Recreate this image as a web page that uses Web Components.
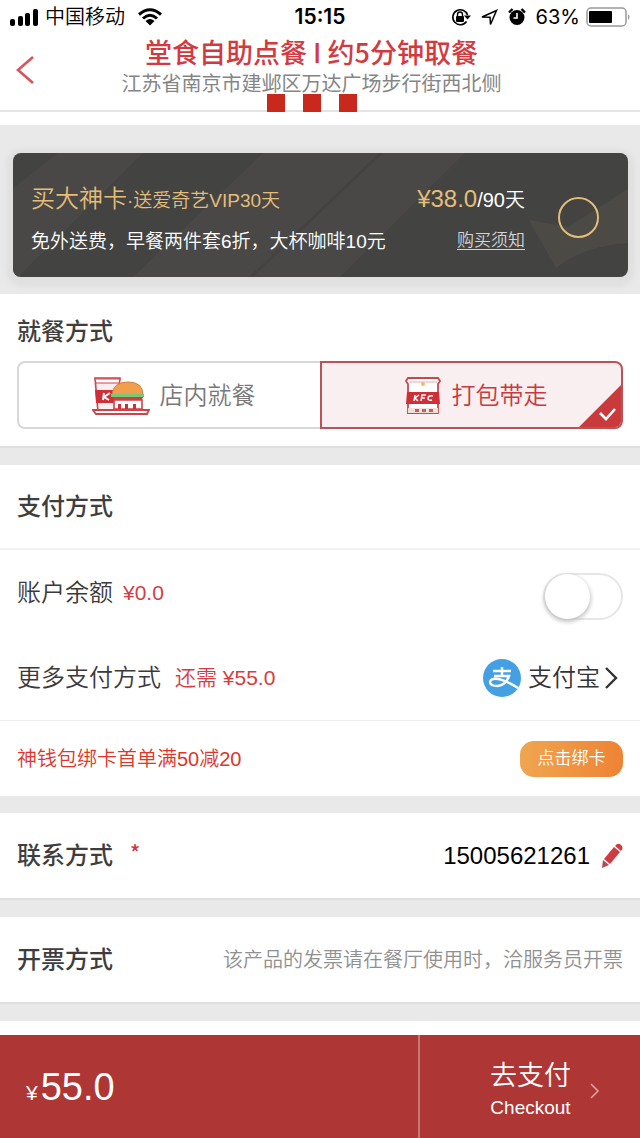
<!DOCTYPE html>
<html lang="zh-CN">
<head>
<meta charset="utf-8">
<meta name="viewport" content="width=device-width, initial-scale=1">
<title>确认订单</title>
<style>
  html, body { margin: 0; }
  body {
    font-family: "Liberation Sans", "Noto Sans CJK SC", sans-serif;
    font-weight: 350;
    color: #3a3a3a;
    background: #fff;
  }
</style>
</head>
<body>
<checkout-page></checkout-page>
<script>
const define = (name, css, html) => customElements.define(name, class extends HTMLElement {
  constructor() {
    super();
    this.attachShadow({ mode: 'open' }).innerHTML =
      `<style>*{box-sizing:border-box}svg{display:block;flex:none}${css}</style>${html}`;
  }
});

define('status-bar', `
  :host { display: grid; grid-template-columns: 1fr auto 1fr; align-items: center; height: 34px; padding: 0 10px; color: #000; }
  div { display: flex; align-items: center; }
  .left { gap: 7px; font-size: 20px; line-height: 30px; }
  .left svg + span { margin-right: 6px; }
  .right { justify-content: flex-end; gap: 10px; font: 20px/30px Inter, sans-serif; }
  .battery { display: flex; gap: 6px; margin-right: -1px; }
  time { font: 600 21px/30px Inter, sans-serif; }
`, `
  <div class="left">
    <svg width="28" height="17" viewBox="0 0 28 17"><rect y="10" width="5" height="7" rx="2"/><rect x="8" y="7" width="5" height="10" rx="2"/><rect x="15" y="4" width="5" height="13" rx="2"/><rect x="23" width="5" height="17" rx="2"/></svg>
    <span>中国移动</span>
    <svg width="24" height="18" viewBox="0 0 24 18"><g fill="none" stroke="#000" stroke-width="3"><path d="M1 6.500Q12-3 23 6.500"/><path d="M5 10.500Q12 4 19 10.500"/></g><path d="M7.500 13Q12 9 16.500 13L12 17.500Z"/></svg>
  </div>
  <time>15:15</time>
  <div class="right">
    <svg width="20" height="18" viewBox="0 0 20 18"><path d="M15.500 13.500A7.500 7.500 0 1 1 16.500 7" fill="none" stroke="#000" stroke-width="1.600"/><path d="M13 7.500h7l-3.500 4z"/><rect x="5" y="8" width="8" height="6" rx="1"/><path d="M6.500 8V6.500a2.500 2.500 0 0 1 5 0V8" fill="none" stroke="#000" stroke-width="1.400"/></svg>
    <svg width="17" height="17" viewBox="0 0 17 17"><path d="M1 8L15.500 1.500 9.500 15.500 9 8.200Z" fill="none" stroke="#000" stroke-width="1.500"/></svg>
    <svg width="18" height="18" viewBox="0 0 18 18"><circle cx="9" cy="9.500" r="7.500"/><path d="M1 4.500L4.500 1M17 4.500L13.500 1" stroke="#000" stroke-width="2.400"/><path d="M9 5v5H5.500" fill="none" stroke="#fff" stroke-width="1.600"/></svg>
    <div class="battery"><span>63%</span>
    <svg width="45" height="20" viewBox="0 0 45 20"><rect x="1" y="1" width="39" height="18" rx="4" fill="none" stroke="#999" stroke-width="1.500"/><rect x="3" y="4" width="23" height="12" rx="1"/><path d="M42 7q3 3 0 6z" fill="#999"/></svg></div>
  </div>
`);

define('page-header', `
  :host { display: block; position: relative; border-bottom: 2px solid #e4e4e4; padding: 1px 77px 11px 60px; text-align: center; margin-bottom: 13px; }
  h1 { margin: 0; font-family: "Noto Sans CJK SC", sans-serif; font-size: 27px; line-height: 34px; font-weight: 500; color: #d33a3f; }
  p { margin: 0; font-size: 20px; line-height: 30px; font-weight: 400; color: #858585; white-space: nowrap; }
  button { position: absolute; left: 0; top: 12px; width: 50px; height: 48px; padding: 0 0 0 16px; border: 0; background: none; }
  .dots { position: absolute; inset: auto 17px -2px 0; display: flex; justify-content: center; gap: 18px; }
  i { width: 18px; height: 18px; background: #c9281c; }
`, `
  <button aria-label="返回"><svg width="18" height="30" viewBox="0 0 18 30"><path d="M17 2L2 15 17 28" fill="none" stroke="#d9535a" stroke-width="2.600"/></svg></button>
  <h1><slot name="title"></slot></h1>
  <p><slot></slot></p>
  <div class="dots"><i></i><i></i><i></i></div>
`);

define('member-card', `
  :host { display: block; background: #e9e9e9; padding: 28px 12px 17px 13px; }
  article { position: relative; display: grid; grid-template-columns: minmax(0, 1fr) auto 41px; column-gap: 33px; align-items: center; height: 124px; padding: 10px 29px 0 18px; border-radius: 8px; background: #434342; overflow: hidden; color: #fff; }
  .frame { border-radius: 10px; box-shadow: 0 3px 5px 7px #e0e0e0; }
  .bg { position: absolute; inset: 0; width: 100%; height: 100%; }
  .copy, .price { position: relative; display: grid; row-gap: 9px; white-space: nowrap; }
  .price { justify-items: end; }
  .copy div, .price div { line-height: 32px; font-size: 19px; }
  .gold { color: #e5bd78; }
  .big { font-size: 24px; }
  .price .line { font-size: 20px; }
  a { font-size: 17px; line-height: 32px; color: #d4d4d4; text-decoration: underline; text-underline-offset: 3px; }
  input { appearance: none; position: relative; width: 41px; height: 41px; margin: 0 0 6px; border: 2px solid #e5bd78; border-radius: 50%; }
  input:checked { background: #e5bd78; }
`, `
  <div class="frame"><article>
    <svg class="bg" viewBox="0 0 615 124" preserveAspectRatio="none"><g fill="#494846"><path d="M0 35L45 0H130L5 124H0Z"/><path d="M120 124L250 0H366L236 124Z"/><path d="M240 124L370 0H452L327 124Z"/><path fill="#4b4a45" d="M516 67L555 74 615 36V90Q570 93 543 115Z"/></g></svg>
    <div class="copy">
      <div class="gold"><span class="big">买大神卡</span>·送爱奇艺VIP30天</div>
      <div>免外送费，早餐两件套6折，大杯咖啡10元</div>
    </div>
    <div class="price">
      <div class="line"><span class="gold big">¥38.0</span>/90天</div>
      <a href="#notice">购买须知</a>
    </div>
    <input type="checkbox" aria-label="购买大神卡">
  </article></div>
`);

define('section-title', `
  :host { display: block; }
  h2 { margin: 0; font-size: 24px; line-height: 36px; font-weight: 500; color: #3e3e3e; }
`, `<h2><slot></slot></h2>`);

define('section-gap', `:host { display: block; height: 19px; background: #e9e9e9; border-top: 2px solid #dfdfdf; } :host([plain]) { height: 17px; border-top: 0; }`, ``);

define('dining-choice', `
  :host { display: block; padding: 20px 17px 17px; }
  fieldset { display: grid; grid-template-columns: 1fr 1fr; margin: 11px 0 0; padding: 0; border: 0; }
  label { position: relative; display: flex; align-items: center; justify-content: center; gap: 10px; height: 68px; border: 2px solid #d8d8d8; padding: 2px 0 0 8px; font-size: 24px; line-height: 36px; color: #787878; overflow: hidden; }
  label:first-child { border-radius: 8px 0 0 8px; border-right: 0; }
  label:last-child { border-radius: 0 8px 8px 0; }
  label:has(:checked) { border-color: #bd5256; background: #f9eef0; color: #c93a40; }
  input { appearance: none; position: absolute; inset: 0; margin: 0; }
  .tick { position: absolute; right: -2px; bottom: -2px; display: none; }
  :checked ~ .tick { display: block; }
`, `
  <section-title>就餐方式</section-title>
  <fieldset aria-label="就餐方式">
    <label><input type="radio" name="way">
      <svg width="58" height="40" viewBox="0 0 58 40">
        <path d="M3 2h25l-4 34H6Z" fill="#f8eef0" stroke="#ce4249" stroke-width="1.600"/><path d="M3 3h25l-1 4H4Z" fill="#fff" stroke="#ce4249"/>
        <path d="M3 14h22v13H4Z" fill="#cf3038"/><path d="M12 17l-1 7M18 17l-6 4 5 3" stroke="#fff" stroke-width="2" fill="none"/>
        <path d="M20 19Q21 6 36 6T51 19Z" fill="#f0a04c" stroke="#d77d3b"/><path d="M19 18h33v3H19Z" fill="#78c878"/><path d="M21 21h30l-2 5H24Z" fill="#c9403f"/>
        <path d="M22 24h28v9H22Z" fill="#fff" stroke="#ce4249" stroke-width="1.600"/><path d="M26 33v-5h3v5M33 33v-5h3v5M41 33v-5h3v5" fill="#cf3038"/>
        <path d="M1 34h56l-2 4H4Z" fill="#fff" stroke="#ce4249" stroke-width="1.800"/>
      </svg><span>店内就餐</span></label>
    <label><input type="radio" name="way" checked>
      <svg width="38" height="40" viewBox="0 0 38 40">
        <path d="M4 2h30l2 3-2 3v29H4V8L2 5Z" fill="#fff" stroke="#c9474c" stroke-width="1.800"/><path d="M5 6h28" stroke="#e5abae"/><circle cx="19" cy="8" r="2" fill="#e9bd67"/>
        <path d="M3 16h32l1 12H2Z" fill="#cf3038"/><path d="M11 19l-1 6M15 19l-4 3 3 3M17 25l1-6h4M17 22h4M29 20q-5-1-5 3 1 2 4 1" fill="none" stroke="#fff" stroke-width="1.500"/>
        <path d="M4 32h30v5H4Z" fill="#f3dfd9"/><path d="M11 33h4v3h-4zM18 33h4v3h-4zM25 33h4v3h-4z" fill="#bd6068"/>
      </svg><span>打包带走</span>
      <svg class="tick" width="46" height="46" viewBox="0 0 46 46"><path d="M0 46L46 0V38Q46 46 38 46Z" fill="#c83a3c"/><path d="M23 30l6 6 9-10" fill="none" stroke="#fff" stroke-width="2.600"/></svg>
    </label>
  </fieldset>
`);

define('info-row', `
  :host { display: flex; align-items: center; justify-content: space-between; height: 85px; padding: 0 17px; white-space: nowrap; font-size: 24px; line-height: 36px; }
  :host([lined]) { border-bottom: 2px solid #f2f2f2; }
  :host([short]) { height: 76px; }
  div { display: flex; align-items: center; }
`, `<div><slot></slot></div><div><slot name="end"></slot></div>`);

define('toggle-switch', `
  :host { display: block; margin-top: 7px; }
  input { appearance: none; display: block; width: 80px; height: 47px; margin: 0; border: 2px solid #e6e6e6; border-radius: 24px; background: #fff; }
  input::before { content: ""; display: block; width: 45px; height: 45px; margin-top: -1px; border-radius: 50%; background: #fff; box-shadow: 0 2px 4px 1px #c4c4c4; }
  input:checked { background: #4cd964; }
  input:checked::before { margin-left: 32px; }
`, `<input type="checkbox" aria-label="使用账户余额">`);

define('pay-channel', `
  :host { display: block; }
  button { display: flex; align-items: center; gap: 7px; padding: 0; border: 0; background: none; font: inherit; color: #333; }
  .arrow { margin: 0 5px 0 -3px; }
`, `
  <button>
    <svg width="38" height="38" viewBox="0 0 38 38"><circle cx="19" cy="19" r="19" fill="#449fe3"/><g fill="none" stroke="#fff" stroke-width="2.400"><path d="M10 12h18M19 8v9M11 17h15Q23 26 15 27 7 27 7 23 8 19 15 20 22 21 35 29"/></g></svg>
    <span>支付宝</span>
    <svg class="arrow" width="14" height="22" viewBox="0 0 14 22"><path d="M2 1L12 11 2 21" fill="none" stroke="#333" stroke-width="2.400"/></svg>
  </button>
`);

define('bind-button', `
  :host { display: block; }
  button { display: block; width: 103px; height: 36px; padding: 0; border: 0; border-radius: 14px; background: linear-gradient(90deg, #f0a550, #ee8334); color: #fff; font: inherit; font-size: 17px; line-height: 36px; }
`, `<button><slot></slot></button>`);

define('edit-button', `
  :host { display: block; margin-left: 11px; }
  button { display: block; padding: 0; border: 0; background: none; }
`, `<button aria-label="修改联系方式"><svg width="22" height="26" viewBox="0 0 22 26"><path d="M13 4l6 5L9 21l-6-5Z" fill="#cf3b40"/><path d="M14 3Q17-1 20 2T20 8Z" fill="#cf3b40"/><path d="M2 17l6 5-7 3Z" fill="#b8474b"/></svg></button>`);

define('checkout-bar', `
  :host { display: grid; grid-template-columns: 1fr 222px; height: 103px; background: #ae3634; color: #fff; }
  .total { display: flex; align-items: baseline; gap: 3px; padding: 29px 26px 0; font-size: 38px; line-height: 46px; }
  small { font-size: 21px; }
  button { display: flex; align-items: center; gap: 19px; padding: 4px 0 0 70px; border: 0; border-left: 2px solid #c77674; background: none; color: inherit; font: inherit; text-align: center; }
  b, em { display: block; font-weight: inherit; font-style: normal; white-space: nowrap; }
  b { font-size: 27px; line-height: 38px; }
  em { font-size: 19px; line-height: 26px; }
  button svg { margin-top: 5px; }
`, `
  <div class="total"><small>¥</small><span>55.0</span></div>
  <button><span><b>去支付</b><em>Checkout</em></span><svg width="10" height="16" viewBox="0 0 10 16"><path d="M1 1L8 8 1 15" fill="none" stroke="#e3a5a4" stroke-width="1.500"/></svg></button>
`);

define('checkout-page', `
  :host { display: flex; flex-direction: column; min-height: 100vh; }
  main { flex: 1; }
  .money { font-size: 21px; color: #d63c41; margin-left: 10px; }
  .due { margin-left: 14px; }
  .promo { font-size: 20px; color: #e0352b; }
  .phone { color: #000; }
  .star { align-self: flex-start; color: #cb3a41; font: 500 21px/28px "Noto Sans CJK SC", sans-serif; margin-left: 17px; }
  .note { font-size: 20px; color: #909090; }
  info-row + info-row[short] { border-top: 1px solid #eee; }
`, `
  <status-bar></status-bar>
  <page-header><span slot="title">堂食自助点餐 I 约5分钟取餐</span>江苏省南京市建邺区万达广场步行街西北侧</page-header>
  <main>
    <member-card></member-card>
    <dining-choice></dining-choice>
    <section-gap></section-gap>
    <info-row lined><section-title>支付方式</section-title></info-row>
    <info-row><span>账户余额</span><span class="money">¥0.0</span><toggle-switch slot="end"></toggle-switch></info-row>
    <info-row><span>更多支付方式</span><span class="money due">还需 ¥55.0</span><pay-channel slot="end"></pay-channel></info-row>
    <info-row short><span class="promo">神钱包绑卡首单满50减20</span><bind-button slot="end">点击绑卡</bind-button></info-row>
    <section-gap plain></section-gap>
    <info-row><section-title>联系方式</section-title><span class="star">*</span><span slot="end" class="phone">15005621261</span><edit-button slot="end"></edit-button></info-row>
    <section-gap></section-gap>
    <info-row><section-title>开票方式</section-title><span slot="end" class="note">该产品的发票请在餐厅使用时，洽服务员开票</span></info-row>
    <section-gap></section-gap>
  </main>
  <checkout-bar></checkout-bar>
`);
</script>
</body>
</html>
